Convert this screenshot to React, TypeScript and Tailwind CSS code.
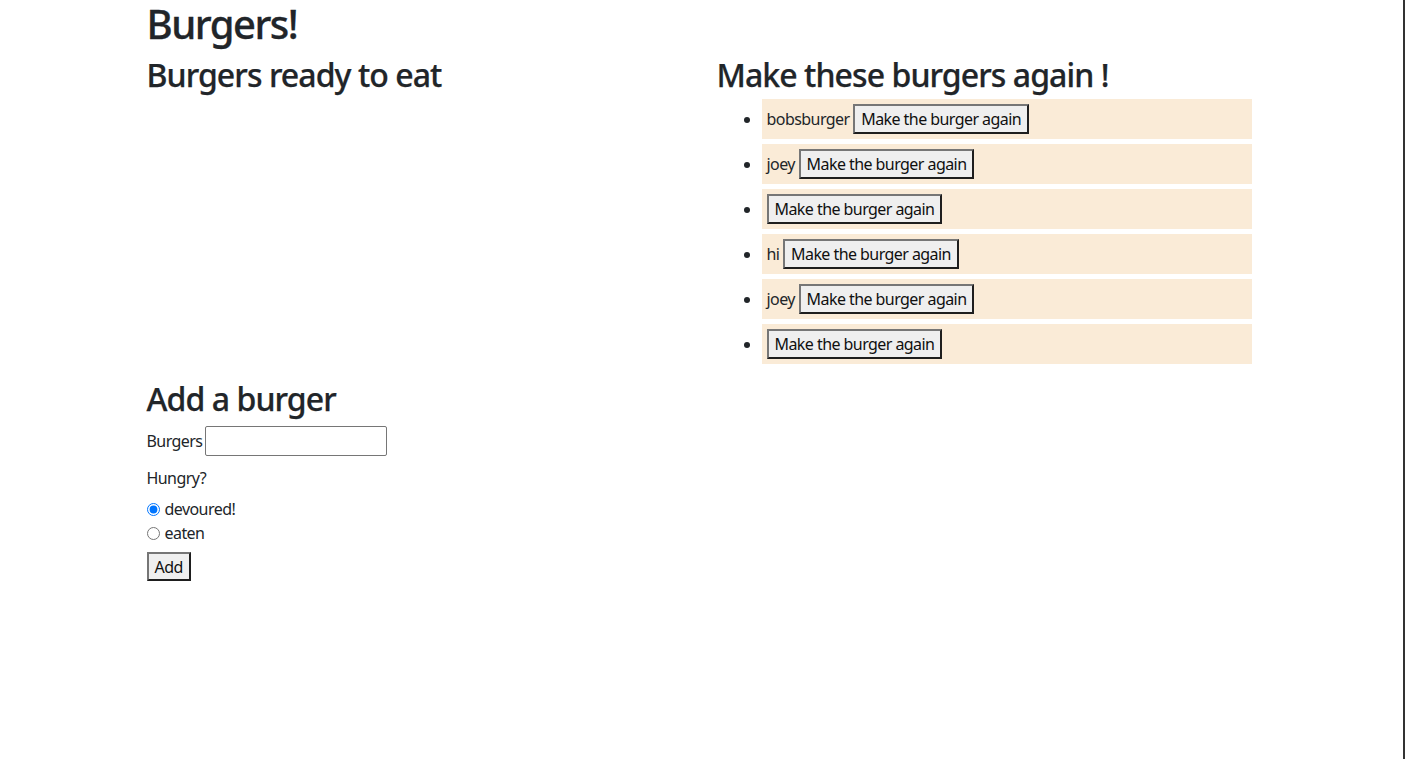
import React from "react";

const burgers = ["bobsburger", "joey", "", "hi", "joey", ""];

function AgainButton() {
  return (
    <button className="h-[30px] border-2 border-t-[#767676] border-l-[#767676] border-b-[#1e1e1e] border-r-[#1e1e1e] bg-[#efefef] px-[6px] text-[16px] leading-[24px] tracking-[-0.035em] text-[#101010]">
      Make the burger again
    </button>
  );
}

export default function App() {
  return (
    <div className="flex min-h-screen w-full bg-white font-['Noto_Sans','Open_Sans',sans-serif] text-[#212529]">
      <div className="flex-1">
        <div className="mx-auto w-[1140px] px-[15px]">
          <h1 className="mb-[8px] text-[40px] font-medium leading-[48px] tracking-[-0.038em] [-webkit-text-stroke:0.3px_#212529]">Burgers!</h1>

          <div className="grid grid-cols-2 gap-[30px]">
            <div>
              <h2 className="text-[32px] font-medium leading-[38px] tracking-[-0.029em] [-webkit-text-stroke:0.25px_#212529]">Burgers ready to eat</h2>
            </div>
            <div>
              <h2 className="text-[32px] font-medium leading-[38px] tracking-[-0.029em] [-webkit-text-stroke:0.25px_#212529]">Make these burgers again !</h2>
              <ul className="mt-[5px] flex list-disc flex-col gap-[5px] pl-[45px] pr-[5px]">
                {burgers.map((name, i) => (
                  <li key={i} className="bg-[#faebd7] p-[5px] text-[16px] leading-[24px] tracking-[-0.035em] marker:text-[#212529]">
                    {name && <span>{name} </span>}
                    <AgainButton />
                  </li>
                ))}
              </ul>
            </div>
          </div>

          <h2 className="mt-[16px] text-[32px] font-medium leading-[38px] tracking-[-0.029em] [-webkit-text-stroke:0.25px_#212529]">Add a burger</h2>
          <form className="mt-[8px] text-[16px] leading-[24px] tracking-[-0.035em]">
            <div className="flex h-[30px] items-center gap-[3px]">
              <label htmlFor="burger">Burgers</label>
              <input id="burger" type="text" className="h-[30px] w-[182px] rounded-[2px] border border-[#767676] px-[2px]" />
            </div>
            <p className="mt-[10px]">Hungry?</p>
            <div className="mt-[7px]">
              <label className="flex h-[24px] items-center gap-[5px]">
                <input type="radio" name="hungry" defaultChecked className="m-0 h-[13px] w-[13px] accent-[#0075ff]" />
                devoured!
              </label>
              <label className="flex h-[24px] items-center gap-[5px]">
                <input type="radio" name="hungry" className="m-0 h-[13px] w-[13px]" />
                eaten
              </label>
            </div>
            <button type="button" className="mt-[7px] h-[29px] border-2 border-t-[#767676] border-l-[#767676] border-b-[#1e1e1e] border-r-[#1e1e1e] bg-[#efefef] px-[6px] text-[#101010]">
              Add
            </button>
          </form>
        </div>
      </div>
      <div className="w-[2px] bg-[#333333]" />
    </div>
  );
}
